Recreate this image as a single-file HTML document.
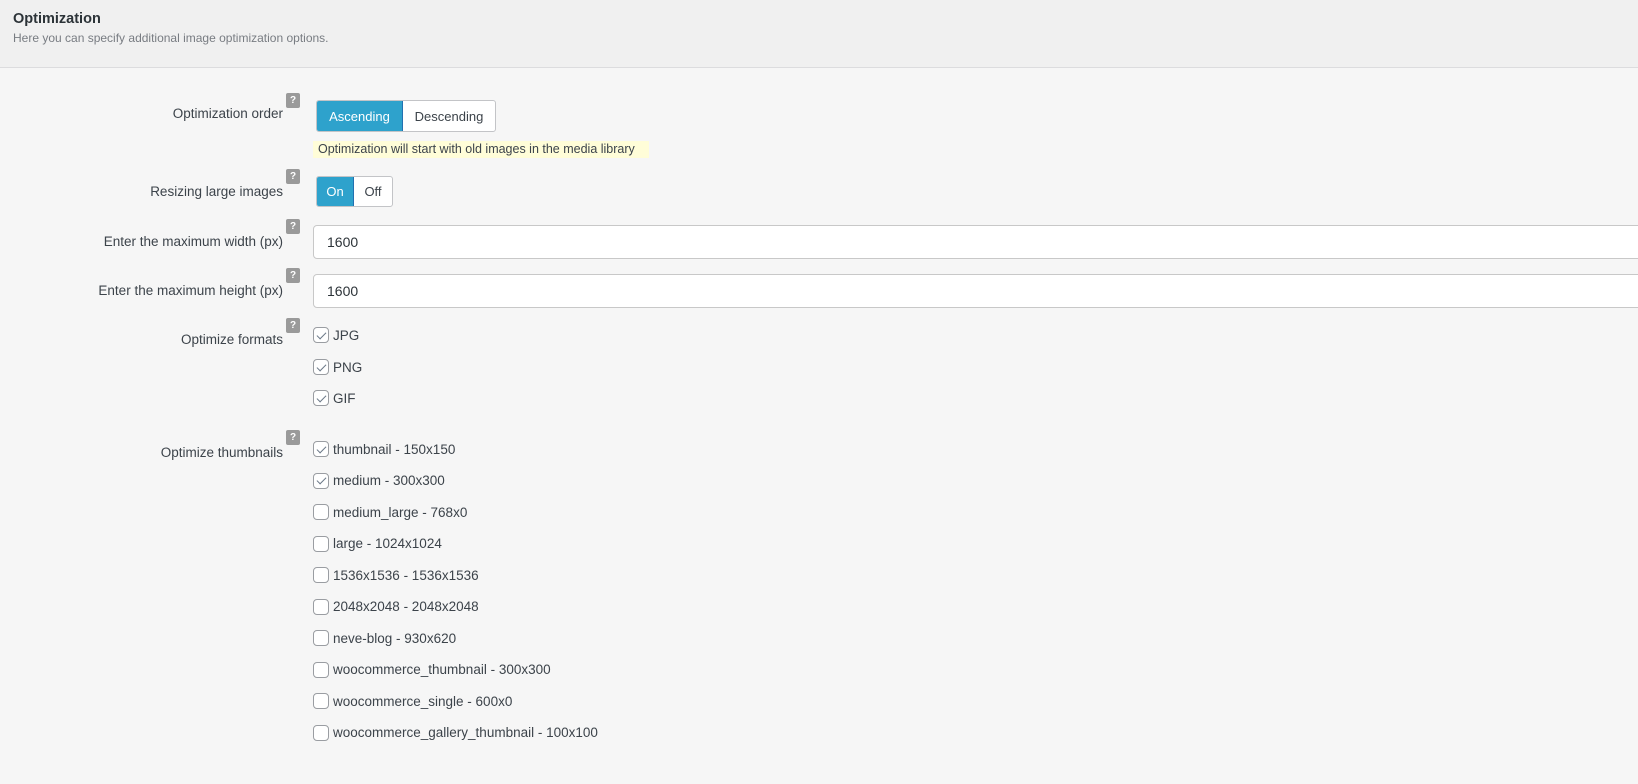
<!DOCTYPE html>
<html><head><style>
*{box-sizing:border-box;margin:0;padding:0}
body{width:1638px;height:784px;background:#f6f6f6;font-family:"Liberation Sans",Arial,sans-serif;color:#3c434a;position:relative;overflow:hidden}
.hdr{position:absolute;left:0;top:0;width:1638px;height:68px;background:#f0f0f0;border-bottom:1px solid #dcdcde}
.t{position:absolute;left:13px;top:11px;font-size:14.5px;font-weight:bold;color:#2c3338}
.s{position:absolute;left:13px;top:31px;font-size:12px;color:#787c82}
.lbl{position:absolute;right:1355px;font-size:13.5px;white-space:nowrap;text-align:right}
.q{position:absolute;left:286px;width:14px;height:15px;background:#9a9a9a;border-radius:2px;color:#fff;font-size:10px;font-weight:bold;text-align:center;line-height:15px}
.bg{position:absolute;display:flex;border:1px solid #c3c4c7;border-radius:3px;overflow:hidden;background:#fff;font-size:13px}
.bg div{display:flex;align-items:center;justify-content:center}
.on{background:#2ea2cc;color:#fff;border-right:1px solid #2271b1}
.note{position:absolute;left:313px;top:141px;width:336px;height:17px;background:#fffdd8;font-size:12.5px;line-height:17px;padding-left:5px}
.inp{position:absolute;left:313px;width:1330px;height:34px;background:#fff;border:1px solid #c8c8c8;border-radius:4px;font-size:14px;line-height:32px;padding-left:13px;color:#2c3338}
.cb{position:absolute;left:313px;font-size:13.5px;display:flex;align-items:center;height:16px}
.cb i{width:16px;height:16px;border:1px solid #9a9da2;border-radius:4px;background:#fff;margin-right:4px;display:inline-block;position:relative}
.cb i.c::after{content:"";position:absolute;left:5px;top:1.5px;width:4px;height:8px;border:solid #6b7888;border-width:0 1.6px 1.6px 0;transform:rotate(45deg)}
</style></head><body>
<div class="hdr"><div class="t">Optimization</div><div class="s">Here you can specify additional image optimization options.</div></div>

<div class="lbl" style="top:106px">Optimization order</div><div class="q" style="top:93px">?</div>
<div class="bg" style="left:316px;top:100px;width:180px;height:32px"><div class="on" style="width:86px">Ascending</div><div style="flex:1">Descending</div></div>
<div class="note">Optimization will start with old images in the media library</div>

<div class="lbl" style="top:184px">Resizing large images</div><div class="q" style="top:169px">?</div>
<div class="bg" style="left:316px;top:176px;width:77px;height:31px"><div class="on" style="width:37px">On</div><div style="flex:1">Off</div></div>

<div class="lbl" style="top:234px">Enter the maximum width (px)</div><div class="q" style="top:219px">?</div>
<div class="inp" style="top:225px">1600</div>
<div class="lbl" style="top:283px">Enter the maximum height (px)</div><div class="q" style="top:268px">?</div>
<div class="inp" style="top:274px">1600</div>

<div class="lbl" style="top:332px">Optimize formats</div><div class="q" style="top:318px">?</div>
<div class="cb" style="top:327px"><i class="c"></i>JPG</div>
<div class="cb" style="top:359px"><i class="c"></i>PNG</div>
<div class="cb" style="top:390px"><i class="c"></i>GIF</div>

<div class="lbl" style="top:445px">Optimize thumbnails</div><div class="q" style="top:430px">?</div>
<div class="cb" style="top:441px"><i class="c"></i>thumbnail - 150x150</div>
<div class="cb" style="top:472.5px"><i class="c"></i>medium - 300x300</div>
<div class="cb" style="top:504px"><i></i>medium_large - 768x0</div>
<div class="cb" style="top:535.5px"><i></i>large - 1024x1024</div>
<div class="cb" style="top:567px"><i></i>1536x1536 - 1536x1536</div>
<div class="cb" style="top:598.5px"><i></i>2048x2048 - 2048x2048</div>
<div class="cb" style="top:630px"><i></i>neve-blog - 930x620</div>
<div class="cb" style="top:661.5px"><i></i>woocommerce_thumbnail - 300x300</div>
<div class="cb" style="top:693px"><i></i>woocommerce_single - 600x0</div>
<div class="cb" style="top:724.5px"><i></i>woocommerce_gallery_thumbnail - 100x100</div>
</body></html>
